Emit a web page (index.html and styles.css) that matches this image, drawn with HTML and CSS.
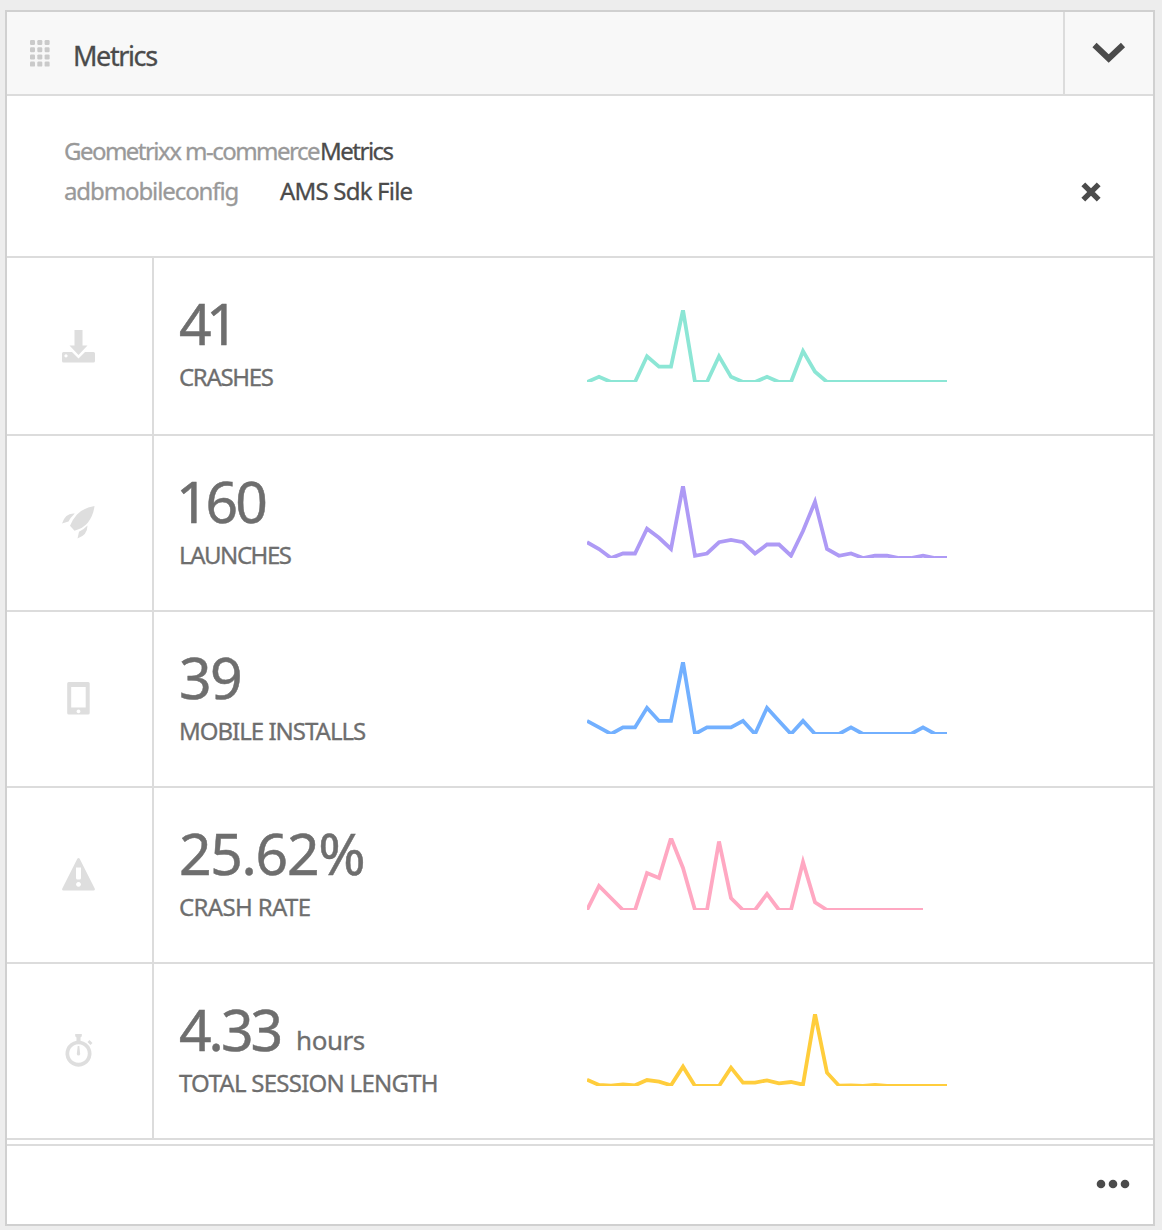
FILE: index.html
```html
<!DOCTYPE html>
<html lang="en">
<head>
<meta charset="utf-8">
<title>Metrics</title>
<link rel="stylesheet" href="styles.css">
</head>
<body>
<section class="card">
  <header class="card-header">
    <svg class="grip" width="20" height="27" viewBox="0 0 20 27">
      <g id="dots"><rect width="5" height="5" rx="1.200"/><rect x="7.3" width="5" height="5" rx="1.200"/><rect x="14.6" width="5" height="5" rx="1.200"/></g>
      <use href="#dots" y="7.2"/><use href="#dots" y="14.4"/><use href="#dots" y="21.6"/>
    </svg>
    <h1 class="title">Metrics</h1>
    <button class="toggle" aria-label="Collapse"><svg width="34" height="22" viewBox="0 0 34 22"><path d="M2.500 3 16.700 16.500 31 3" fill="none" stroke="#4b4b4b" stroke-width="6"/></svg></button>
  </header>
  <div class="info">
    <div class="info-row"><span class="key key-app">Geometrixx m-commerce</span><span class="value value-metrics">Metrics</span></div>
    <div class="info-row"><span class="key key-config">adbmobileconfig</span><span class="value value-file">AMS Sdk File</span>
      <svg class="close" width="20" height="20" viewBox="0 0 20 20"><path d="M2.300 2.300 17.700 17.700M17.700 2.300 2.300 17.700" stroke="#4b4b4b" stroke-width="5.400"/></svg></div>
  </div>
  <div class="metrics">
    <article class="metric">
      <div class="metric-icon"><svg width="33" height="33" viewBox="0 0 33 33"><path d="M12.500 0h8v15.500h5L16.500 25 7.500 15.500h5z"/><path fill-rule="evenodd" d="M1.500 22H10l6.500 6.500L23 22h8.500q1.500 0 1.500 1.500v7.500q0 1.500-1.500 1.500h-30Q0 32.500 0 31v-7.500Q0 22 1.500 22zM4 24.300a1.600 1.600 0 1 0 .01 0z"/></svg></div>
      <div class="metric-text"><div class="number n-crashes">41</div><div class="label l-crashes">CRASHES</div></div>
      <svg class="chart teal" viewBox="0 0 30 14" preserveAspectRatio="none"><polyline points="0,14 1,13 2,14 3,14 4,14 5,9 6,11 7,11 8,0 9,14 10,14 11,9 12,13 13,14 14,14 15,13 16,14 17,14 18,8 19,12 20,14 30,14"/></svg>
    </article>
    <article class="metric">
      <div class="metric-icon"><svg width="33" height="33" viewBox="0 0 33 33"><path d="M32.500 0Q22 1.500 15 8.500 10.500 13.500 8 19.800L12.500 24.700Q21 22.500 26 16.500 31.500 9 32.500 0zM12.800 7.500Q3.500 6.500 0 17.500L6.500 15.500Q8.500 11.500 12.800 7.500zM25.500 19.500Q21 24.200 17 25.700L15.500 32.500Q25.500 29 25.500 19.500z"/></svg></div>
      <div class="metric-text"><div class="number n-launches">160</div><div class="label l-launches">LAUNCHES</div></div>
      <svg class="chart purple" viewBox="0 0 30 32" preserveAspectRatio="none"><polyline points="0,25 1,28 2,32 3,30 4,30 5,19 6,23 7,28 8,0 9,31 10,30 11,25 12,24 13,25 14,30 15,26 16,26 17,31 18,20 19,7 20,28 21,31 22,30 23,32 24,31 25,31 26,32 27,32 28,31 29,32 30,32"/></svg>
    </article>
    <article class="metric">
      <div class="metric-icon"><svg width="33" height="33" viewBox="0 0 33 33"><path fill-rule="evenodd" d="M6.700 0h19.500q1.500 0 1.500 1.500v29.500q0 1.500-1.500 1.500H6.700q-1.500 0-1.500-1.500V1.500Q5.200 0 6.700 0zM9.200 5v20.500h14.500V5zM16.500 27.500a1.900 1.900 0 1 0 .01 0z"/></svg></div>
      <div class="metric-text"><div class="number n-installs">39</div><div class="label l-installs">MOBILE INSTALLS</div></div>
      <svg class="chart blue" viewBox="0 0 30 11" preserveAspectRatio="none"><polyline points="0,9 1,10 2,11 3,10 4,10 5,7 6,9 7,9 8,0 9,11 10,10 11,10 12,10 13,9 14,11 15,7 16,9 17,11 18,9 19,11 21,11 22,10 23,11 27,11 28,10 29,11 30,11"/></svg>
    </article>
    <article class="metric">
      <div class="metric-icon"><svg width="33" height="33" viewBox="0 0 33 33"><path fill-rule="evenodd" d="M15.300.8q1.200-1.600 2.400 0L32.700 30.500q.7 2-1.200 2h-30q-1.900 0-1.200-2zM14 9.500V20q0 1.500 1.500 1.500h2Q19 21.500 19 20V9.500zM16.500 24a2.400 2.400 0 1 0 .01 0z"/></svg></div>
      <div class="metric-text"><div class="number n-rate">25.62%</div><div class="label l-rate">CRASH RATE</div></div>
      <svg class="chart pink" viewBox="0 0 30 750" preserveAspectRatio="none"><polyline points="0,750 1,500 2,625 3,750 4,750 5,365 6,417 7,0 8,312 9,750 10,750 11,36 12,625 13,750 14,750 15,583 16,750 17,750 18,250 19,670 20,750 28,750"/></svg>
    </article>
    <article class="metric">
      <div class="metric-icon"><svg width="33" height="33" viewBox="0 0 33 33"><path fill-rule="evenodd" d="M13.200 0h6.600v2.300l-1.300 1.200v3.300a13 13 0 1 1-4 0V3.500l-1.300-1.200zM16.500 10.200a9.300 9.300 0 1 0 .01 0z"/><path d="M15.700 12h1.600l.9 8q-.3 1.600-1.700 1.600T14.800 20zM25.500 8l2-2 3 3-2 2z"/></svg></div>
      <div class="metric-text"><div class="number n-session">4.33<span class="unit">hours</span></div><div class="label l-session">TOTAL SESSION LENGTH</div></div>
      <svg class="chart yellow" viewBox="0 0 30 216" preserveAspectRatio="none"><polyline points="0,197 1,213 2,215 3,211 4,214 5,198 6,203 7,214 8,158 9,216 10,216 11,216 12,161 13,206 14,206 15,199 16,208 17,204 18,212 19,0 20,176 21,215 22,214 23,216 24,213 25,216 30,216"/></svg>
    </article>
  </div>
  <footer class="card-footer"><svg width="34" height="10" viewBox="0 0 34 10" fill="#4b4b4b"><circle cx="5" cy="5" r="4.300"/><circle cx="17" cy="5" r="4.300"/><circle cx="29" cy="5" r="4.300"/></svg></footer>
</section>
</body>
</html>
```
FILE: styles.css
```css
* { box-sizing: border-box; }
body {
  margin: 0;
  height: 1230px;
  padding: 10px 7px 0 5px;
  overflow: hidden;
  background: #ededed;
  font-family: "Noto Sans", "Open Sans", sans-serif;
  color: #4b4b4b;
  -webkit-text-stroke: .3px currentColor;
}
.card { height: 1216px; border: 2px solid #d0d0d0; background: #fff; }
.card-header {
  display: flex;
  align-items: center;
  height: 84px;
  padding-left: 23px;
  border-bottom: 2px solid #dcdcdc;
  background: #f8f8f8;
}
.grip { margin-top: 1px; fill: #cacaca; }
.title { margin: 5px 0 0 23px; font-size: 27px; font-weight: 400; line-height: 36px; letter-spacing: -1.4px; }
.toggle {
  display: flex;
  justify-content: center;
  width: 90px;
  height: 82px;
  margin-left: auto;
  padding: 30px 0 0;
  border: 0;
  border-left: 2px solid #dcdcdc;
  background: none;
}
.info { height: 162px; padding: 36px 52px 0 57px; border-bottom: 2px solid #dcdcdc; }
.info-row { display: flex; align-items: center; height: 40px; font-size: 24px; line-height: 32px; white-space: nowrap; }
.info-row span { padding-bottom: 3px; }
.key { color: #999; }
.key-app { width: 256px; letter-spacing: -1.53px; }
.key-config { width: 216px; letter-spacing: -1.1px; }
.value-metrics { letter-spacing: -1.5px; }
.value-file { letter-spacing: -.8px; }
.close { margin-left: auto; }
.metric { display: flex; height: 176px; border-bottom: 2px solid #dcdcdc; }
.metric:first-child { height: 178px; }
.metric-icon { display: flex; align-items: flex-start; width: 147px; padding: 72px 0 0 55px; border-right: 2px solid #dcdcdc; fill: #dedede; }
.metric:not(:first-child) .metric-icon { padding-top: 70px; }
.metric-text { width: 433px; padding: 28px 0 0 25px; color: #6e6e6e; white-space: nowrap; }
.number { height: 74px; font-size: 57px; line-height: 74px; letter-spacing: -3px; -webkit-text-stroke-width: .5px; }
.n-crashes { letter-spacing: -5.5px; }
.n-launches { margin-left: -3px; }
.n-installs { letter-spacing: -1.5px; }
.n-rate { letter-spacing: -1.3px; }
.unit { position: relative; top: -1px; margin-left: 16px; font-size: 26px; letter-spacing: -.5px; -webkit-text-stroke-width: .3px; }
.label { height: 34px; font-size: 24px; line-height: 34px; }
.l-crashes { letter-spacing: -1.35px; }
.l-launches { letter-spacing: -1.45px; }
.l-installs { letter-spacing: -1px; }
.l-rate { letter-spacing: -.65px; }
.l-session { letter-spacing: -.74px; }
.chart { width: 360px; height: 72px; margin-top: 50px; overflow: hidden; fill: none; stroke-width: 3.8; }
.metric:first-child .chart { margin-top: 52px; }
.chart polyline { vector-effect: non-scaling-stroke; }
.teal { stroke: #8ce6d5; }
.purple { stroke: #ae9af5; }
.blue { stroke: #72b0ff; }
.pink { stroke: #ffa8c2; }
.yellow { stroke: #ffcd3c; }
.card-footer { display: flex; justify-content: flex-end; align-items: center; height: 80px; margin-top: 4px; padding: 0 23px 2px 0; border-top: 2px solid #dcdcdc; }
```
